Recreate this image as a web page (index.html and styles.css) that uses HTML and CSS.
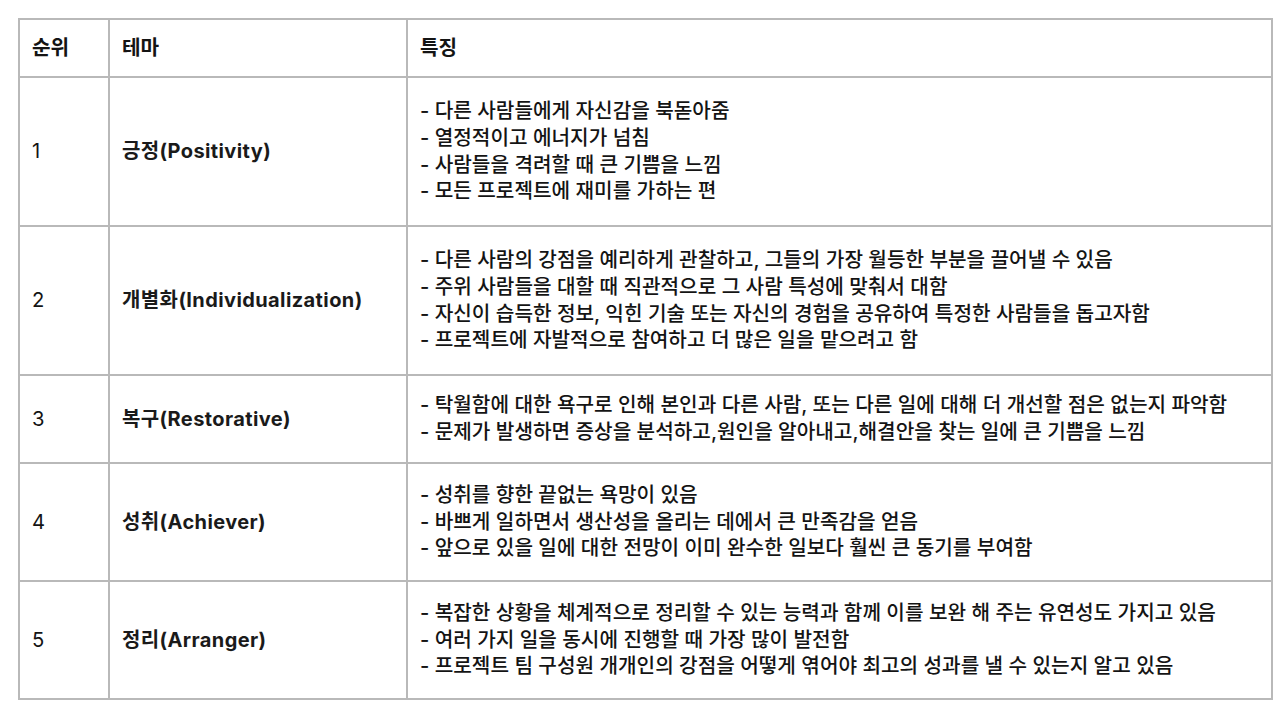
FILE: index.html
```html
<!DOCTYPE html>
<html lang="ko">
<head>
<meta charset="utf-8">
<title>강점 테마</title>
<link rel="stylesheet" href="styles.css">
</head>
<body>
<table class="strengths">
  <colgroup>
    <col class="c-rank">
    <col class="c-theme">
    <col class="c-desc">
  </colgroup>
  <thead>
    <tr class="row-head">
      <th>순위</th>
      <th>테마</th>
      <th>특징</th>
    </tr>
  </thead>
  <tbody>
    <tr class="row-4">
      <td class="rank">1</td>
      <td class="theme">긍정(Positivity)</td>
      <td>- 다른 사람들에게 자신감을 북돋아줌<br>- 열정적이고 에너지가 넘침<br>- 사람들을 격려할 때 큰 기쁨을 느낌<br>- 모든 프로젝트에 재미를 가하는 편</td>
    </tr>
    <tr class="row-4">
      <td class="rank">2</td>
      <td class="theme">개별화(Individualization)</td>
      <td>- 다른 사람의 강점을 예리하게 관찰하고, 그들의 가장 월등한 부분을 끌어낼 수 있음<br>- 주위 사람들을 대할 때 직관적으로 그 사람 특성에 맞춰서 대함<br>- 자신이 습득한 정보, 익힌 기술 또는 자신의 경험을 공유하여 특정한 사람들을 돕고자함<br>- 프로젝트에 자발적으로 참여하고 더 많은 일을 맡으려고 함</td>
    </tr>
    <tr class="row-2">
      <td class="rank">3</td>
      <td class="theme">복구(Restorative)</td>
      <td>- 탁월함에 대한 욕구로 인해 본인과 다른 사람, 또는 다른 일에 대해 더 개선할 점은 없는지 파악함<br>- 문제가 발생하면 증상을 분석하고,원인을 알아내고,해결안을 찾는 일에 큰 기쁨을 느낌</td>
    </tr>
    <tr class="row-3">
      <td class="rank">4</td>
      <td class="theme">성취(Achiever)</td>
      <td>- 성취를 향한 끝없는 욕망이 있음<br>- 바쁘게 일하면서 생산성을 올리는 데에서 큰 만족감을 얻음<br>- 앞으로 있을 일에 대한 전망이 이미 완수한 일보다 훨씬 큰 동기를 부여함</td>
    </tr>
    <tr class="row-3">
      <td class="rank">5</td>
      <td class="theme">정리(Arranger)</td>
      <td>- 복잡한 상황을 체계적으로 정리할 수 있는 능력과 함께 이를 보완 해 주는 유연성도 가지고 있음<br>- 여러 가지 일을 동시에 진행할 때 가장 많이 발전함<br>- 프로젝트 팀 구성원 개개인의 강점을 어떻게 엮어야 최고의 성과를 낼 수 있는지 알고 있음</td>
    </tr>
  </tbody>
</table>
</body>
</html>
```

FILE: styles.css
```css
html, body {
  margin: 0;
  padding: 0;
  background: #ffffff;
}

body {
  padding: 18px 8px 0 18px;
  font-family: Inter, "Noto Sans CJK KR", sans-serif;
  color: #141414;
}

.strengths {
  border-collapse: collapse;
  width: 1255px;
  table-layout: fixed;
  font-size: 20.2px;
  line-height: 26.7px;
  font-weight: 500;
}

.c-rank { width: 90px; }
.c-theme { width: 298px; }

.strengths th,
.strengths td {
  border: 2px solid #b9b9b9;
  padding: 0 12px;
  text-align: left;
  vertical-align: middle;
}

.strengths th {
  font-weight: 700;
}

.strengths td.rank {
  font-weight: 400;
}

.strengths td.theme {
  font-weight: 700;
  font-size: 20px;
  letter-spacing: 0.4px;
  color: #1a1a1a;
}

.row-head { height: 58px; }
.row-4 { height: 149px; }
.row-3 { height: 118px; }
.row-2 { height: 88px; }
```
